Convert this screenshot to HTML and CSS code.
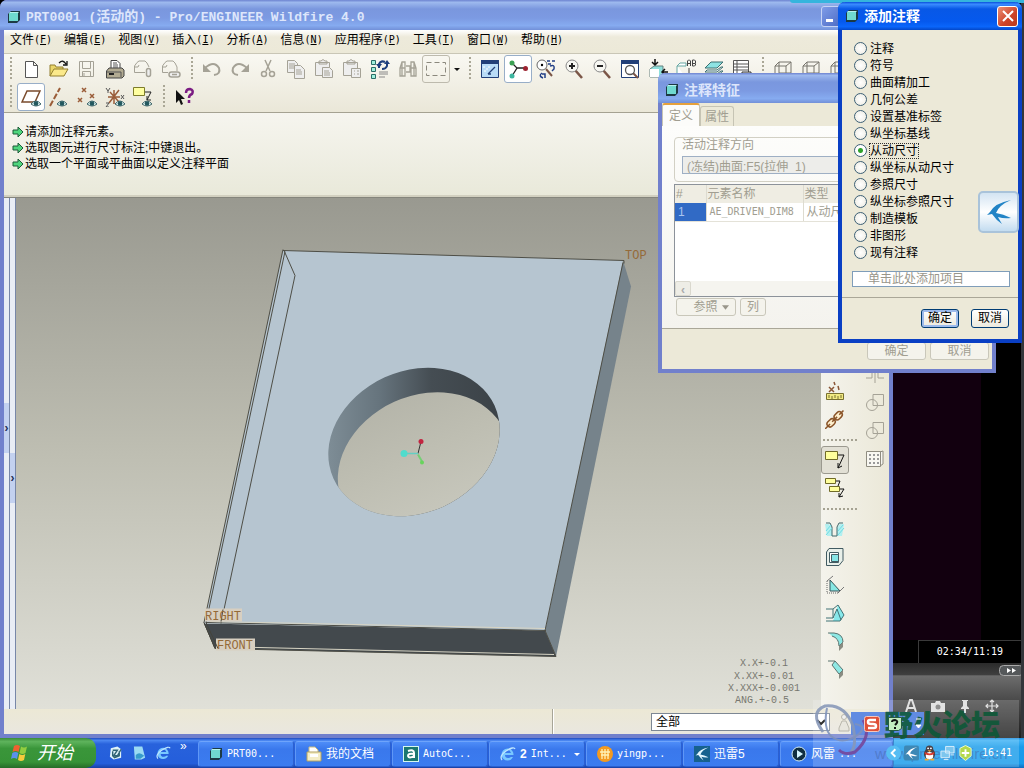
FILE: index.html
```html
<!DOCTYPE html>
<html lang="zh-CN">
<head>
<meta charset="utf-8">
<title>PRT0001 (活动的) - Pro/ENGINEER Wildfire 4.0</title>
<link rel="stylesheet" href="styles.css">
</head>
<body>
<svg class="defs" aria-hidden="true">
  <defs>
    <symbol id="cube" viewBox="0 0 14 14"><path d="M1 4 4 1h9v9l-3 3H1z" fill="#1c3a44"/><path d="M2 3h9v8H2z" fill="#6fd9d0"/><path d="M2 3l1-1h9l-1 1z" fill="#b5f2ee"/></symbol>
    <symbol id="eye" viewBox="0 0 10 7"><path d="M0 4Q5-2 10 4Q5 8 0 4z" fill="#d9eeee" stroke="#3d6468"/><circle cx="5" cy="3.500" r="2.300" fill="#23585e"/></symbol>
    <symbol id="wire" viewBox="0 0 20 20"><path d="M2 7h11v11H2zM2 7l4-4h12v11l-5 4M13 7l5-4M6 3v11h12M6 14l-4 4" fill="none" stroke="#77746c"/></symbol>
    <symbol id="bird" viewBox="0 0 30 30"><path d="M27 3Q11 6 6 15L3 18l5-1Q12 23 18 27Q15 22 14 20Q20 22 27 21Q19 17 12 16Q15 8 27 3z" fill="currentColor"/></symbol>
    <symbol id="ie" viewBox="0 0 16 16"><path d="M13 9H5Q5 12 8 12Q10 12 11 11H13Q11 14.500 8 14.500A6 6 0 1 1 13.500 9zM5 7h6Q10 4 8 4Q5.500 4 5 7z" fill="#79c8ff"/><path d="M2 14Q-1 10 6 5Q14 0 15 3" fill="none" stroke="#bfe6ff" stroke-width="1.300"/></symbol>
    <symbol id="arrow" viewBox="0 0 12 12"><path d="M1 4h5V1l5 5-5 5V8H1z" fill="#4fd67d" stroke="#1d5b38"/></symbol>
    <symbol id="shapes" viewBox="0 0 20 20"><path d="M8 1.500h10.500v11H8z" fill="none" stroke="#a5a296"/><circle cx="7" cy="12" r="5.500" fill="none" stroke="#a5a296"/></symbol>
    <linearGradient id="sky" gradientUnits="userSpaceOnUse" x1="0" y1="197" x2="0" y2="709"><stop offset="0" stop-color="#999990"/><stop offset=".5" stop-color="#bebeb2"/><stop offset="1" stop-color="#e0e0d8"/></linearGradient>
    <linearGradient id="wall" gradientUnits="userSpaceOnUse" x1="328" y1="0" x2="500" y2="0"><stop offset="0" stop-color="#7e8d96"/><stop offset=".3" stop-color="#66747d"/><stop offset=".6" stop-color="#454d53"/><stop offset="1" stop-color="#3b4247"/></linearGradient>
    <clipPath id="hole"><ellipse cx="414" cy="441.500" rx="88.400" ry="71" transform="rotate(-24.300 414 441.500)"/></clipPath>
  </defs>
</svg>

<div class="desktop">
  <section class="player">
    <div class="screen"></div>
    <div class="time">02:34/11:19</div>
    <div class="deck">
      <div class="seek"><svg viewBox="0 0 22 11"><rect x=".5" y=".5" width="24" height="10" rx="4" fill="#55585a" stroke="#aaa"/><path d="M8 3l4 2.500-4 2.500zM13 3l4 2.500-4 2.500z" fill="#fff"/></svg></div>
      <div class="deck-icons">
        <svg viewBox="0 0 14 14"><path d="M2 13 6 1h2l4 12M4 9h6" fill="none" stroke="#ddd" stroke-width="2"/></svg>
        <svg viewBox="0 0 14 14"><path d="M0 4h4l1-2h4l1 2h4v9H0z" fill="#ddd"/><circle cx="7" cy="8" r="2.500" fill="#777"/></svg>
        <svg viewBox="0 0 14 14"><path d="M4 1h6v1H9v5l2 2v1H8v4H6v-4H3V9l2-2V2H4z" fill="#ddd"/></svg>
        <svg viewBox="0 0 14 14"><path d="M7 1v12M1 7h12M5 3l2-2 2 2M5 11l2 2 2-2M3 5 1 7l2 2M11 5l2 2-2 2" fill="none" stroke="#ddd" stroke-width="1.200"/></svg>
      </div>
    </div>
  </section>

  <main class="window cad">
    <header class="titlebar">
      <svg class="i14"><use href="#cube"/></svg>
      <h1>PRT0001 (<b class="zh">活动的</b>) - Pro/ENGINEER Wildfire 4.0</h1>
      <button class="minimise" aria-label="最小化"></button>
    </header>
    <nav class="menubar">
      <button>文件<i>(<u>F</u>)</i></button><button>编辑<i>(<u>E</u>)</i></button><button>视图<i>(<u>V</u>)</i></button><button>插入<i>(<u>I</u>)</i></button><button>分析<i>(<u>A</u>)</i></button><button>信息<i>(<u>N</u>)</i></button><button>应用程序<i>(<u>P</u>)</i></button><button>工具<i>(<u>T</u>)</i></button><button>窗口<i>(<u>W</u>)</i></button><button>帮助<i>(<u>H</u>)</i></button>
    </nav>
    <div class="toolbars">
      <div class="toolrow">
        <span class="grip"></span>
        <button aria-label="新建"><svg viewBox="0 0 20 20"><path d="M4.500 2.500h8l4 4v12h-12zM12.500 2.500v4h4" fill="#fff" stroke="#555"/></svg></button>
        <button aria-label="打开"><svg viewBox="0 0 20 20"><path d="M1 17V6h5l1 2h7v3" fill="#ead66a" stroke="#927f31"/><path d="M1 17 5 10h14l-4 7z" fill="#fbe98b" stroke="#927f31"/><path d="M10 4q4-4 7 1M18 2v4h-4" fill="none" stroke="#111" stroke-width="1.300"/></svg></button>
        <button aria-label="保存"><svg viewBox="0 0 20 20"><path d="M2.500 2.500h14v15h-14zM5.500 2.500v7h8v-7M5.500 17.500v-5h8v5M7 14v3" fill="none" stroke="#a5a296"/></svg></button>
        <button aria-label="打印"><svg viewBox="0 0 20 20"><path d="M6 10V1.500h6l3 3V10" fill="#fff" stroke="#444"/><path d="M8 4h4M8 6h5M8 8h5" stroke="#555"/><path d="M1.500 12 4 9h13l2 2v6l-2 2H1.500z" fill="#b2ab92" stroke="#444"/><path d="M2 13h14v5" fill="none" stroke="#555"/><path d="M4 15h5" stroke="#222" stroke-width="2"/></svg></button>
        <button aria-label="发送邮件"><svg viewBox="0 0 20 20"><path d="M1.500 13.500V7L4 3.500 6 2h6l2 2 2 4M1.500 13.500H12M2 8h3l1-2" fill="none" stroke="#a5a296"/><rect x="13.500" y="9.500" width="4" height="8" rx="2" fill="#eee" stroke="#a5a296" stroke-width="1.500"/></svg></button>
        <button aria-label="发送链接"><svg viewBox="0 0 20 20"><path d="M1.500 13.500V7L4 3.500 6 2h6l2 2 2 4v4M1.500 13.500H7M2 8h3l1-2" fill="none" stroke="#a5a296"/><rect x="8" y="13" width="11" height="5" rx="2.500" fill="#eee" stroke="#a5a296" stroke-width="1.500"/><path d="M11 15.500h5" stroke="#a5a296" stroke-width="1.500"/></svg></button>
        <span class="grip"></span>
        <button aria-label="撤消"><svg viewBox="0 0 20 20"><path d="M3 9q9-8 14 0 2 6-5 7" fill="none" stroke="#a5a296" stroke-width="2"/><path d="M1 5v8h8z" fill="#a5a296"/></svg></button>
        <button aria-label="重做"><svg viewBox="0 0 20 20"><path d="M17 9Q8 1 3 9q-2 6 5 7" fill="none" stroke="#a5a296" stroke-width="2"/><path d="M19 5v8h-8z" fill="#a5a296"/></svg></button>
        <button aria-label="剪切"><svg viewBox="0 0 20 20"><path d="M7 1l5 11M13 1 8 12" fill="none" stroke="#a5a296" stroke-width="1.500"/><circle cx="6" cy="15" r="2.500" fill="none" stroke="#a5a296" stroke-width="1.500"/><circle cx="14" cy="15" r="2.500" fill="none" stroke="#a5a296" stroke-width="1.500"/></svg></button>
        <button aria-label="复制"><svg viewBox="0 0 20 20"><path d="M1.500 1.500h7l3 3v9h-10z" fill="#eee" stroke="#a5a296"/><path d="M3 5h6M3 7h6M3 9h6" stroke="#a5a296"/><path d="M8.500 6.500h6l4 4v9h-10zM10 11h5M10 13h6M10 15h6" fill="#eee" stroke="#a5a296"/></svg></button>
        <button aria-label="粘贴"><svg viewBox="0 0 20 20"><path d="M1.500 3.500h14v13h-14zM5 5V2h2q2-3 4 0h2v3z" fill="#eee" stroke="#a5a296"/><path d="M8.500 8.500h7l3 3v7h-10zM10 12h5M10 14h6M10 16h6" fill="#eee" stroke="#a5a296"/></svg></button>
        <button aria-label="选择性粘贴"><svg viewBox="0 0 20 20"><path d="M1.500 3.500h14v13h-14zM5 5V2h2q2-3 4 0h2v3z" fill="#eee" stroke="#a5a296"/><path d="M9.500 9.500h9v9h-9zM12 12h1M15 12h2M12 15h1M15 15h2" fill="#eee" stroke="#a5a296"/></svg></button>
        <button aria-label="再生"><svg viewBox="0 0 20 20"><path d="M1.500 1.500h4v4h-4zM1.500 8.500h4v4h-4zM1.500 15.500h4v4h-4z" fill="#9ff0dc" stroke="#2a6d66"/><path d="M9 9V5q2-4 6-2M17 3v4q-1 3-5 3" fill="none" stroke="#1e3f7d" stroke-width="2"/><path d="M6 5h6L9 9zM14 5h6l-3-4z" fill="#1e3f7d"/><path d="M9 13h9M9 15h9M9 18h6" stroke="#888"/></svg></button>
        <button aria-label="查找"><svg viewBox="0 0 20 20"><path d="M2 17V9l2-6h3v14zM13 17V3h3l2 6v8zM8 7h4v6H8M4 3v14M16 3v14M2 9h5M13 9h5" fill="none" stroke="#a5a296" stroke-width="1.300"/></svg></button>
        <button class="framed" aria-label="选择框"><svg viewBox="0 0 20 20"><path d="M.5 3.500h19v13H.5z" fill="none" stroke="#8b887d" stroke-dasharray="5 3"/></svg></button>
        <button class="narrow" aria-label="选择选项"><svg viewBox="0 0 7 7"><path d="M1 2h6L4 5z" fill="#111"/></svg></button>
        <span class="grip"></span>
        <button aria-label="重画"><svg viewBox="0 0 20 20"><path d="M1.500 1.500h17v17h-17z" fill="#b9dcf7" stroke="#213f78"/><path d="M1 1h18v4H1z" fill="#213f78"/><path d="M3 8h2M6 10h2M4 12h2M8 8h2" stroke="#fff"/><path d="M8 15 15 8M8 15h3" stroke="#213f78" stroke-width="1.300"/></svg></button>
        <button class="checked" aria-label="旋转中心"><svg viewBox="0 0 20 20"><path d="M4 4l5 5-5 8M9 9h9" fill="none" stroke="#222" stroke-width="1.300"/><circle cx="4" cy="4" r="2.500" fill="#3ba053"/><circle cx="4" cy="17" r="2.500" fill="#3cb6a0"/><circle cx="17.500" cy="9.500" r="2.500" fill="#9c2331"/></svg></button>
        <button aria-label="定向模式"><svg viewBox="0 0 20 20"><circle cx="6" cy="6" r="5" fill="#fff" stroke="#666"/><circle cx="6" cy="6" r="1.200"/><path d="M10 10l6 7" stroke="#7b5647" stroke-width="2"/><path d="M11 2h3M16 2h3M12 5h3M14 7q5-2 4 3l-2 2M6 14q-4 3 1 5M6 15l3 0v4" fill="none" stroke="#223f86" stroke-width="1.500"/></svg></button>
        <button aria-label="放大"><svg viewBox="0 0 20 20"><path d="M11 11l7 8" stroke="#7b5647" stroke-width="2.500"/><circle cx="8" cy="7" r="6" fill="#f7f7f2" stroke="#888"/><path d="M8 4v6M5 7h6" stroke="#222" stroke-width="2"/></svg></button>
        <button aria-label="缩小"><svg viewBox="0 0 20 20"><path d="M11 11l7 8" stroke="#7b5647" stroke-width="2.500"/><circle cx="8" cy="7" r="6" fill="#f7f7f2" stroke="#888"/><path d="M5 7h6" stroke="#222" stroke-width="2"/></svg></button>
        <button aria-label="重新调整"><svg viewBox="0 0 20 20"><path d="M1.500 1.500h17v17h-17z" fill="#fff" stroke="#213f78"/><path d="M1 1h18v4H1z" fill="#213f78"/><path d="M13 14l5 5" stroke="#7b5647" stroke-width="2"/><circle cx="10" cy="11" r="4.500" fill="none" stroke="#555" stroke-width="1.300"/></svg></button>
        <button aria-label="视图方向"><svg viewBox="0 0 20 20"><path d="M2 10l4-3h9v7l-3 4H2z" fill="#8fe0dc" stroke="#66817f"/><path d="M2 10h9v8H2z" fill="#fff"/><path d="M7 0v6M4 3l3 3 3-3M20 13h-6M17 10l-3 3 3 3" fill="none" stroke="#111" stroke-width="1.500"/></svg></button>
        <button aria-label="视图列表"><svg viewBox="0 0 20 20"><path d="M1 7l3-3h6v3H1v10h8" fill="#fff" stroke="#66a7a3"/><path d="M11.500 7V2l1-1h1l1 1v5M11.500 4.500h3M16.500 1v6h2l1-1V4.500h-3M16.500 1h2l1 1v2M13 9v8" fill="none" stroke="#444"/></svg></button>
        <button aria-label="层"><svg viewBox="0 0 20 20"><path d="M1 9l6-6h12l-6 6z" fill="#8de3e3" stroke="#3c6e70"/><path d="M1 13l2-2h10l4-3 2 0-6 5zM1 17l2-2h10l4-3 2 0-6 5z" fill="#fff" stroke="#3c6e70"/></svg></button>
        <button aria-label="视图管理器"><svg viewBox="0 0 20 20"><path d="M1.500 1.500h15v14h-15zM1 5h15M1 8h15M1 11h15M5 1v14" fill="#fff" stroke="#555"/><path d="M10 13h9v5h-9z" fill="#ddd" stroke="#333"/></svg></button>
        <span class="grip"></span>
        <button aria-label="线框"><svg><use href="#wire"/></svg></button>
        <button aria-label="隐藏线"><svg><use href="#wire"/></svg></button>
        <button aria-label="无隐藏线"><svg><use href="#wire"/></svg></button>
      </div>
      <div class="toolrow">
        <span class="grip"></span>
        <button class="checked" aria-label="基准平面"><svg viewBox="0 0 20 20"><path d="M1 15 6 4h13l-5 11z" fill="none" stroke="#7a4b2c" stroke-width="1.500"/><use href="#eye" x="10" y="13" width="10" height="7"/></svg></button>
        <button aria-label="基准轴"><svg viewBox="0 0 20 20"><path d="M1 19 11 1" stroke="#9a5c38" stroke-width="2" stroke-dasharray="6 2"/><use href="#eye" x="8" y="13" width="10" height="7"/></svg></button>
        <button aria-label="基准点"><svg viewBox="0 0 20 20"><path d="M5 1l4 4M9 1 5 5M1 11l4 4M5 11l-4 4M13 7l4 4M17 7l-4 4" stroke="#9a5c38" stroke-width="1.500"/><use href="#eye" x="10" y="13" width="10" height="7"/></svg></button>
        <button aria-label="坐标系"><svg viewBox="0 0 20 20"><path d="M9 3v14M3 10h12M5 5l9 10M14 3 4 16" stroke="#9a5c38" stroke-width="1.500"/><path d="M1 1l2 3 2-3M3 4v2M1 16h3l-3 4h3M16 8l3 4M19 8l-3 4" fill="none" stroke="#555"/><use href="#eye" x="10" y="13" width="10" height="7"/></svg></button>
        <button aria-label="注释显示"><svg viewBox="0 0 20 20"><path d="M.5 .500h11v8H.5z" fill="#ffffa0" stroke="#7d7c2a"/><path d="M12 5h6l-4 8M14 9v4h4" fill="none" stroke="#222"/><use href="#eye" x="9" y="13" width="10" height="7"/></svg></button>
        <span class="grip"></span>
        <button aria-label="帮助指针"><svg viewBox="0 0 20 20"><path d="M2 3v13l3-3 2 5 2-1-2-5h4z" fill="#111"/><path d="M12 6q0-4 4-4 4 1 2 5-3 1-3 4M15 13v3" fill="none" stroke="#7b1d83" stroke-width="2.500"/></svg></button>
      </div>
    </div>
    <div class="messages">
      <p><svg><use href="#arrow"/></svg>请添加注释元素。</p>
      <p><svg><use href="#arrow"/></svg>选取图元进行尺寸标注;中键退出。</p>
      <p><svg><use href="#arrow"/></svg>选取一个平面或平曲面以定义注释平面</p>
    </div>
    <div class="workspace">
      <div class="rail"><button aria-label="展开导航器">›</button></div>
      <div class="rail second"><button aria-label="展开浏览器">›</button></div>
      <svg class="model" viewBox="16 197 805 512" preserveAspectRatio="xMidYMid slice" role="img" aria-label="带孔的板">
        <rect x="0" y="190" width="900" height="530" fill="url(#sky)"/>
        <path d="M623 260l8 26-75 370-11-26z" fill="#76838b"/>
        <path d="M204 623l341 7 11 26-341-8z" fill="#43494d"/>
        <path d="M283 250l340 10-78 370-341-7z" fill="#b6c5d0"/>
        <g clip-path="url(#hole)"><rect x="320" y="360" width="190" height="165" fill="url(#wall)"/><ellipse cx="423.500" cy="466" rx="88.400" ry="71" transform="rotate(-24.300 423.500 466)" fill="url(#sky)"/></g>
        <g fill="none" stroke="#4e4e46"><path d="M283 250l341 10v3M283 249l-79 373 11 26M285 251l-79 371M284 250l11 25-74 348M206 622l340 8-1 0M545 630l78-368M545 630l11 26-341-8"/><path d="M210 621l335 7M216 646l338 8" stroke="#d8d5c4"/></g>
        <path d="M205 608h37v13h-37zM216 638h39v12h-39z" fill="#d8cfc0"/>
        <path d="M206 622l12 26M204 622l11 26M223 609l-2 12" stroke="#44443c"/>
        <g class="datum"><text x="625" y="258">TOP</text><text x="205" y="619">RIGHT</text><text x="217" y="648">FRONT</text></g>
        <path d="M418 453l3-12" stroke="#333"/><path d="M404 453h14" stroke="#63cfc3" stroke-width="1.500"/><path d="M418 454l4 7" stroke="#75cf75" stroke-width="2"/>
        <circle cx="421" cy="441" r="2.500" fill="#c22440"/><circle cx="404" cy="453" r="3.500" fill="#50dccc"/><circle cx="422" cy="462" r="2" fill="#68d45c"/>
        <g class="tolerance"><text x="764" y="665">X.X+-0.1</text><text x="764" y="678">X.XX+-0.01</text><text x="764" y="690">X.XXX+-0.001</text><text x="762" y="702">ANG.+-0.5</text></g>
      </svg>
      <aside class="sidebar">
        <div class="sidecol main-tools">
          <button aria-label="测量点"><svg viewBox="0 0 20 20"><path d="M4 6l5 5M9 6l-5 5M9 1l1 3M13 5l1 4" stroke="#8a5636" stroke-width="1.500"/><path d="M1.500 12.500h17v6h-17z" fill="#f1e982" stroke="#777031"/><path d="M4 14v3M7 15v3M10 14v3M13 15v3M16 14v3" stroke="#777031"/></svg></button>
          <button aria-label="链接"><svg viewBox="0 0 20 20"><g transform="rotate(-45 10 10)" fill="#fff0ce" stroke="#8a5429" stroke-width="1.500"><rect x="0" y="7" width="9" height="6" rx="3"/><rect x="10" y="7" width="9" height="6" rx="3"/><path d="M-4 10h7M6 10h7M16 10h6"/></g></svg></button>
          <span class="rule"></span>
          <button class="pressed" aria-label="注释"><svg viewBox="0 0 20 20"><path d="M.5 1.500h12v8H.5z" fill="#ffff9c" stroke="#706b28"/><path d="M13 5h6l-6 13M13 13v5l4-2" fill="none" stroke="#111"/></svg></button>
          <button aria-label="注释传播"><svg viewBox="0 0 20 20"><path d="M.5 .500h10v5h-10zM4.500 8.500h10v5h-10z" fill="#ffff9c" stroke="#706b28"/><path d="M11 3h4l-2 5M15 11h4l-5 8M14 15v4l4-1" fill="none" stroke="#111"/></svg></button>
          <span class="rule"></span>
          <button aria-label="孔"><svg viewBox="0 0 20 20"><path d="M0 5h4l3 4v8H2zM19 5h-4l-3 4v8h5z" fill="#b2eff0"/><path d="M1 4h4l2 4v9h5V8l2-4h4" fill="none" stroke="#41686d"/><path d="M1 12l5-6M1 16l6-7M13 12l5-6M13 16l6-7" stroke="#6fdbe2"/></svg></button>
          <button aria-label="壳"><svg viewBox="0 0 20 20"><path d="M1.500 5 4 1.500h14v12L14 18.500H1.500z" fill="#e8efe9" stroke="#425b62"/><path d="M4.500 5.500h9v10h-9z" fill="#fff" stroke="#425b62"/><path d="M6.500 7.500h7v7h-7z" fill="#86e4e5" stroke="#425b62"/></svg></button>
          <button aria-label="筋"><svg viewBox="0 0 20 20"><path d="M5 5v11h10z" fill="#87e8e4" stroke="#37555a"/><path d="M2 6l6-5M13 18l6-6" stroke="#777"/><path d="M2 6v12h12" fill="none" stroke="#666" stroke-dasharray="1 1"/></svg></button>
          <button aria-label="拔模"><svg viewBox="0 0 20 20"><path d="M1 18h7l5-16 6 10-4 6z" fill="#86e8ea"/><path d="M1 6h7v9H1M8 6l5-4 6 10-4 6H1M8 15l4-9 4 11" fill="none" stroke="#417276"/></svg></button>
          <button aria-label="倒圆角"><svg viewBox="0 0 20 20"><path d="M4 2h5q9 1 9 9l-4 4q0-8-7-10" fill="#8de8e4"/><path d="M3 2h6q9 1 9 9l-4 4q0-8-7-10" fill="none" stroke="#59726f"/><path d="M14 15l4-4v5l-4 4z" fill="#8a8c82"/></svg></button>
          <button aria-label="倒角"><svg viewBox="0 0 20 20"><path d="M7 6l3-4 8 9-4 4z" fill="#8de8e4" stroke="#59726f"/><path d="M3 2h7" stroke="#59726f"/><path d="M14 15l4-4v5l-4 4z" fill="#8a8c82"/></svg></button>
        </div>
        <div class="sidecol edit-tools">
          <button aria-label="镜像"><svg viewBox="0 0 20 20"><path d="M10 3v15M7 3v10H1M13 3v10h6" fill="none" stroke="#a5a296"/></svg></button>
          <button aria-label="合并"><svg><use href="#shapes"/></svg></button>
          <button aria-label="修剪"><svg><use href="#shapes"/></svg></button>
          <button aria-label="阵列"><svg viewBox="0 0 20 20"><path d="M1.500 2.500h14v15h-14zM15 3l3-1v13l-3 2" fill="#f8f7f1" stroke="#8f8c80"/><path d="M4 6h10M4 10h10M4 14h10" stroke="#999" stroke-width="2" stroke-dasharray="2 2"/></svg></button>
        </div>
      </aside>
    </div>
    <footer class="statusbar">
      <div class="status-text"></div>
      <div class="filter"><select aria-label="选择过滤器"><option>全部</option></select><svg viewBox="0 0 12 20"><circle cx="6" cy="4" r="2.500" fill="#eee" stroke="#aaa79a"/><path d="M4 8h4l3 7v3H1v-3z" fill="#e4e2d8" stroke="#aaa79a"/></svg></div>
    </footer>
  </main>

  <section class="window feature">
    <header class="titlebar"><svg class="i14"><use href="#cube"/></svg><h2>注释特征</h2></header>
    <div class="tabs"><button class="on">定义</button><button>属性</button></div>
    <div class="tabpanel">
      <fieldset disabled>
        <label for="dir">活动注释方向</label>
        <input id="dir" value="(冻结)曲面:F5(拉伸_1)">
      </fieldset>
      <div class="grid">
        <table>
          <thead><tr><th class="num">#</th><th class="name">元素名称</th><th>类型</th></tr></thead>
          <tbody><tr><td class="sel">1</td><td><i>AE_DRIVEN_DIM8</i></td><td>从动尺寸</td></tr></tbody>
        </table>
        <div class="scroll"><button disabled aria-label="向左滚动">‹</button></div>
      </div>
      <div class="pair"><button disabled class="refs">参照 <svg viewBox="0 0 8 5"><path d="M0 0h8L4 5z" fill="#99968a"/></svg></button><button disabled>列</button></div>
    </div>
    <div class="actions"><button disabled>确定</button><button disabled>取消</button></div>
  </section>

  <div class="player-edge"></div>

  <section class="window add">
    <header class="titlebar"><svg class="i14"><use href="#cube"/></svg><h2>添加注释</h2><button class="close" aria-label="关闭"><svg viewBox="0 0 12 12"><path d="M1 1l10 10M11 1 1 11" stroke="#fff" stroke-width="2"/></svg></button></header>
    <form class="add-body">
      <div class="choices">
        <label><input type="radio" name="k"><span>注释</span></label>
        <label><input type="radio" name="k"><span>符号</span></label>
        <label><input type="radio" name="k"><span>曲面精加工</span></label>
        <label><input type="radio" name="k"><span>几何公差</span></label>
        <label><input type="radio" name="k"><span>设置基准标签</span></label>
        <label><input type="radio" name="k"><span>纵坐标基线</span></label>
        <label><input type="radio" name="k" checked><span>从动尺寸</span></label>
        <label><input type="radio" name="k"><span>纵坐标从动尺寸</span></label>
        <label><input type="radio" name="k"><span>参照尺寸</span></label>
        <label><input type="radio" name="k"><span>纵坐标参照尺寸</span></label>
        <label><input type="radio" name="k"><span>制造模板</span></label>
        <label><input type="radio" name="k"><span>非图形</span></label>
        <label><input type="radio" name="k"><span>现有注释</span></label>
      </div>
      <input class="collector" aria-label="参照收集器" placeholder="单击此处添加项目">
      <div class="actions"><button type="button" class="default">确定</button><button type="button">取消</button></div>
    </form>
  </section>

  <button class="bird" aria-label="迅雷"><svg><use href="#bird"/></svg></button>

  <div class="langbar">
    <svg viewBox="0 0 16 16"><rect x=".5" y=".5" width="15" height="15" rx="2" fill="#df5038" stroke="#f5c6bb"/><path d="M12 4H6Q4 4 4 6t3 2h2q3 0 3 2t-2 2H4" fill="none" stroke="#fff" stroke-width="2.500"/></svg>
    <svg viewBox="0 0 16 16"><path d="M1.500 1.500h13v11l-3 2h-10z" fill="#c3ecc0" stroke="#275a43"/><path d="M5 6q0-2 3-2 4 1 1 4L8 9M8 11v2" fill="none" stroke="#111" stroke-width="2"/></svg>
    <svg viewBox="0 0 16 16"><path d="M6 3h5M6 9h5L8.500 12z" fill="#fff" stroke="#fff"/></svg>
  </div>
</div>

<footer class="taskbar">
  <button class="start"><svg viewBox="0 0 20 20"><path d="M3 3q3-2 6 0L7.500 9q-3-2-6 0z" fill="#ef6130"/><path d="M10 3.500q3 2 6 0L14.500 10q-3 2-6 0z" fill="#92cd40"/><path d="M1.300 10q3-2 6 0L6 16q-3-2-6 0z" fill="#5b91ec"/><path d="M8.300 11q3 2 6 0L13 17q-3 2-6 0z" fill="#f7cb3c"/></svg>开始</button>
  <div class="quick">
    <svg viewBox="0 0 16 16"><path d="M3 3 10 1l4 3v9l-8 2-4-3z" fill="#dff3f8"/><path d="M5 5h5l-4 6h4l4-7M12 6v5l-5 2-2-2V6" fill="none" stroke="#306474" stroke-width="1.500"/></svg>
    <svg viewBox="0 0 16 16"><path d="M2 1h9l3 12-4 2H3z" fill="#9bdaf3"/><path d="M4 10q4-4 9 1l-4 3H4z" fill="#389bcc"/></svg>
    <svg><use href="#ie"/></svg>
    <span>»</span>
  </div>
  <div class="tasks">
    <button><svg class="i14"><use href="#cube"/></svg><i>PRT00...</i></button>
    <button><svg viewBox="0 0 16 16"><path d="M3 6V1h6l3 3v3" fill="#fff" stroke="#c7bc83"/><path d="M1 6h14v9H1z" fill="#f4edc7" stroke="#b4a360"/><path d="M4 8h8v3H4z" fill="#fff"/></svg>我的文档</button>
    <button><svg viewBox="0 0 16 16"><rect x=".5" y=".5" width="15" height="15" fill="#1b7770" stroke="#d5f7ef"/><path d="M5 5q6-2 6 2v5M11 8Q5 7 5 10q1 3 6 0" fill="none" stroke="#fff" stroke-width="2"/></svg><i>AutoC...</i></button>
    <button><svg><use href="#ie"/></svg><b>2</b><i>Int...</i><svg class="caret" viewBox="0 0 7 7"><path d="M1 2h6L4 5z" fill="#fff"/></svg></button>
    <button><svg viewBox="0 0 16 16"><circle cx="8" cy="8" r="8" fill="#f39a20"/><path d="M3 6h10M5 3v10M8 3v10M11 3v10M4 9h8" stroke="#fff2b6" stroke-width="1.300"/></svg><i>yingp...</i></button>
    <button><svg viewBox="0 0 16 16"><rect width="16" height="16" fill="#16618e"/><use href="#bird" width="16" height="16" color="#e2f6ff"/></svg>迅雷5</button>
    <button><svg viewBox="0 0 16 16"><circle cx="8" cy="8" r="7" fill="#112f42" stroke="#d4edf4"/><path d="M6 4l6 4-6 4z" fill="#d4f5ff"/></svg>风雷<i>...</i></button>
  </div>
  <div class="tray">
    <button aria-label="显示隐藏的图标"><svg viewBox="0 0 16 16"><circle cx="8" cy="8" r="8" fill="#57bdf3"/><path d="M10 4 6 8l4 4" fill="none" stroke="#fff" stroke-width="2"/></svg></button>
    <svg viewBox="0 0 16 16"><rect width="16" height="16" rx="2" fill="#3d88b5"/><use href="#bird" width="16" height="16" color="#fff"/></svg>
    <svg viewBox="0 0 16 16"><ellipse cx="8" cy="9" rx="6" ry="6" fill="#4a4146"/><circle cx="8" cy="4" r="4" fill="#4a4146"/><ellipse cx="8" cy="11" rx="4" ry="4" fill="#fff"/><path d="M3 7q5 3 10 0v2q-5 3-10 0z" fill="#dd3a2d"/><path d="M6 5h4L8 7zM3 14h4v2H3zM9 14h4v2H9z" fill="#f5ab31"/><circle cx="6.500" cy="3" r="1" fill="#fff"/><circle cx="9.500" cy="3" r="1" fill="#fff"/></svg>
    <svg viewBox="0 0 16 16"><path d="M6 1h9v7H6zM1 6h9v7H1z" fill="#7dc6ee" stroke="#dceffc"/><path d="M4 15h5M11 10h4" stroke="#dceffc"/></svg>
    <svg viewBox="0 0 16 16"><path d="M8 0l6 3v8l-6 5-6-5V3z" fill="#b4d84c" stroke="#eefad0"/><path d="M8 4v8M4 8h8" stroke="#fff" stroke-width="2"/></svg>
    <time>16:41</time>
  </div>
</footer>

<div class="watermark">
  <svg viewBox="0 0 62 62"><path d="M10 32Q-4 12 12 6q20-2 28 20 4 20-2 26" fill="none" stroke="#8a9aba" stroke-width="3"/><path d="M14 8q-4 20 4 28 12 10 28-2 8-8-4-10" fill="none" stroke="#8295bd" stroke-width="2"/><path d="M50 20q10 16-8 32-10 4-16-2" fill="none" stroke="#7a4a9c" stroke-width="3"/></svg>
  <div><strong>野火论坛</strong><span>www.proewildfire.cn</span></div>
</div>
</body>
</html>
```
FILE: styles.css
```css
* { box-sizing: border-box; }
body {
  margin: 0;
  height: 100vh;
  display: flex;
  flex-direction: column;
  overflow: hidden;
  font: 12px/16px "Liberation Sans", "Noto Sans CJK SC", sans-serif;
  color: #000;
  background: #000;
}
button, input, select { font: inherit; color: inherit; margin: 0; padding: 0; border: 0; background: none; }
h1, h2, p, fieldset { margin: 0; padding: 0; border: 0; }
i { font: 10px/16px "DejaVu Sans Mono", "Liberation Mono", monospace; }
svg { display: block; flex: none; }
.defs { position: absolute; width: 0; height: 0; }
.desktop { flex: 1; position: relative; min-height: 0; overflow: hidden; }

/* windows */
.window { position: absolute; display: flex; flex-direction: column; border: 4px solid #7180cc; border-top: 0; border-radius: 7px 7px 0 0; background: #ece9d8; }
.titlebar { display: flex; align-items: center; gap: 5px; flex: none; height: 30px; margin: 0 -4px; padding: 3px 4px 0 7px; border-radius: 7px 7px 0 0; background: linear-gradient(#6d83d0, #9db9ee 8%, #7a97de 30%, #7c9ae2 60%, #86abf0 85%, #7290d8); color: #dde6fb; }
.titlebar h1 { flex: 1; font: bold 13px/20px "Liberation Mono", monospace; white-space: pre; }
.titlebar h2 { flex: 1; font-size: 14px; font-weight: bold; line-height: 20px; }
.zh { font: bold 14px/20px "Noto Sans CJK SC", sans-serif; }
.i14 { width: 14px; height: 14px; }
.cad { inset: 0 131px 0 0; }
.minimise { width: 21px; height: 21px; margin-right: 47px; border: 1px solid #c5d3f5; border-radius: 3px; background: linear-gradient(135deg, #7e9ce8, #4c6bc4); display: flex; align-items: flex-end; padding: 4px; }
.minimise::after { content: ""; width: 7px; height: 3px; background: #fff; }

.menubar { flex: none; display: flex; gap: 12px; height: 23px; padding: 2px 6px 0; background: linear-gradient(#fff, #edeadb 30%, #ece9d8); }
.menubar button { display: flex; align-items: center; height: 16px; }
.toolbars { flex: none; border-top: 1px solid #c9c6b6; border-bottom: 1px solid #a5a292; padding: 1px 0; background: linear-gradient(#f9f8f2, #eae7d8); overflow: hidden; }
.toolrow { display: flex; height: 28px; }
.toolrow button, .sidecol button { flex: none; width: 28px; height: 28px; display: grid; place-items: center; border: 1px solid transparent; border-radius: 3px; }
.toolrow button svg, .sidecol button svg { width: 20px; height: 20px; }
.toolrow .narrow { width: 13px; }
.toolrow .narrow svg { width: 7px; height: 7px; }
.grip { flex: none; width: 13px; margin: 2px 0; background: repeating-linear-gradient(#aaa796 0 2px, transparent 2px 4px) center / 2px 100% no-repeat; }
.toolrow .checked { background: #fff; border-color: #98aec8; }
.toolrow .framed { border-color: #bdbaad; }
.messages { flex: none; height: 84px; padding: 11px 8px 0; background: linear-gradient(#f6f5ef, #e9e9da); border-bottom: 2px solid #d2d0c0; }
.messages p { display: flex; align-items: center; gap: 1px; height: 16px; }
.messages svg { width: 12px; height: 12px; }

.workspace { flex: 1; min-height: 0; display: flex; border-top: 1px solid #85857c; }
.rail { flex: none; width: 6px; padding: 205px 0 0; border-right: 1px solid #7887a8; background: #e9edf5; }
.rail.second { padding-top: 255px; }
.rail button { display: grid; place-items: center; width: 5px; height: 50px; background: #c3d1f0; color: #1d2c52; font-weight: bold; line-height: 16px; }
.model { flex: 1; min-width: 0; width: 0; height: 100%; }
.datum { font: 12px "Liberation Mono", monospace; fill: #956a38; }
.tolerance { font: 10px "Liberation Mono", monospace; fill: #77776f; text-anchor: middle; }
.sidebar { flex: none; width: 68px; display: flex; background: linear-gradient(90deg, #f4f3ec, #ebe8d8); }
.sidecol { display: flex; flex-direction: column; width: 40px; }
.sidecol.edit-tools { width: 28px; padding-top: 163px; }
.main-tools { padding-top: 179px; }
.sidecol .pressed { background: #e2e0d5; border-color: #9b998f; }
.rule { flex: none; height: 13px; margin-right: 2px; margin-left: 2px; background: repeating-linear-gradient(90deg, #a5a292 0 2px, transparent 2px 4px) center / 100% 2px no-repeat; }
.statusbar { flex: none; display: flex; height: 25px; background: linear-gradient(#ece8d5, #e9e7df); }
.status-text { flex: 1; border-right: 1px solid #a7a597; }
.filter { display: flex; gap: 8px; width: 336px; padding: 4px 0 0 97px; border-left: 1px solid #fff; }
.filter select { width: 179px; height: 18px; padding-left: 0; border: 1px solid #7d8794; background: #fff; }
.filter svg { width: 12px; height: 20px; }

/* annotation feature dialog */
.feature { left: 658px; top: 73px; width: 338px; height: 300px; }
.tabs { flex: none; display: flex; align-items: flex-end; height: 23px; }
.tabs button { height: 20px; width: 34px; border: 1px solid #c6c4b4; border-bottom: 0; border-radius: 3px 3px 0 0; color: #a19e91; }
.tabs .on { height: 23px; width: 38px; border-top: 2px solid #e6a13c; background: #fcfcfa; }
.tabpanel { flex: none; padding: 11px 12px 12px; background: linear-gradient(#fdfdfb, #f4f3ee); color: #a19e91; border-bottom: 1px solid #aaa798; }
.tabpanel fieldset { height: 45px; padding: 0 7px; border: 1px solid #d2d0c4; border-radius: 4px; }
.tabpanel label { display: block; height: 18px; line-height: 14px; }
.tabpanel input { display: block; width: 100%; height: 18px; padding: 0 4px; border: 1px solid #9eafc4; background: #ededea; color: #a19e91; }
.grid { height: 113px; margin-top: 2px; border: 1px solid #8c929a; background: #fff; display: flex; flex-direction: column; }
.grid table { width: 100%; table-layout: fixed; border-collapse: collapse; }
.grid th, .grid td { height: 18px; padding: 0 3px; text-align: left; font-weight: normal; line-height: 16px; border-right: 1px solid #dddbd0; white-space: nowrap; }
.grid th { padding: 0 1px; background: #efede3; }
.grid td { border-bottom: 1px solid #e4e2d8; }
.num { width: 31px; }
.name { width: 97px; }
.grid .sel { background: #316ac5; color: #a9c4ef; }
.scroll { margin-top: auto; height: 15px; background: #f5f4ef; }
.scroll button { display: grid; place-items: center; width: 16px; height: 15px; border: 1px solid #dad8ce; border-radius: 2px; background: #eeede6; color: #aaa; font-weight: bold; }
.pair { display: flex; gap: 4px; padding: 1px 2px 0; }
.pair button, .feature .actions button { height: 18px; border: 1px solid #c9c7ba; border-radius: 3px; background: #f4f3ec; color: #a19e91; line-height: 14px; }
.pair button { width: 26px; }
.pair .refs { width: 60px; display: flex; align-items: center; justify-content: center; gap: 4px; padding-left: 10px; }
.pair svg { width: 7px; height: 5px; }
.feature .actions { display: flex; justify-content: flex-end; gap: 4px; padding: 13px 3px 0; }
.feature .actions button { width: 59px; }

/* add annotation dialog */
.add { left: 838px; top: 2px; width: 184px; height: 341px; border-color: #0a3fc4; }
.add .titlebar { height: 28px; padding-top: 0; background: linear-gradient(#0a4fdc, #3a8cff 8%, #0858e6 25%, #0559ee 70%, #0a66fb 88%, #0347c8); color: #fff; }
.close { width: 21px; height: 21px; display: grid; place-items: center; border: 1px solid #fff; border-radius: 3px; background: linear-gradient(135deg, #ec9076, #cd4328 60%, #b93a1d); }
.close svg { width: 12px; height: 12px; }
.add-body { flex: 1; display: flex; flex-direction: column; padding-top: 10px; }
.choices { padding-left: 12px; }
.choices label { display: flex; align-items: center; gap: 2px; height: 17px; }
.choices input { appearance: none; width: 13px; height: 13px; border: 1px solid #3d6076; border-radius: 50%; background: radial-gradient(#fff, #eceae0); }
.choices input:checked { background: radial-gradient(circle, #2fa12c 0 2px, #fff 3px); }
.choices span { height: 16px; line-height: 14px; border: 1px solid transparent; }
.choices input:checked + span { border: 1px dotted #333; }
.collector { height: 16px; margin: 10px 8px 10px 10px; padding: 0 15px; border: 1px solid #7f9db9; background: #fff; }
.collector::placeholder { color: #99968a; opacity: 1; }
.add .actions { flex: 1; display: flex; justify-content: flex-end; gap: 12px; padding: 11px 9px 0; border-top: 1px solid #aaa798; }
.add .actions button { width: 38px; height: 19px; line-height: 15px; border: 1px solid #003c74; border-radius: 3px; background: linear-gradient(#fff, #eceade); }
.add .actions .default { box-shadow: inset 0 0 0 2px #9dbbec; }

.bird { position: absolute; right: 5px; top: 191px; width: 41px; height: 42px; display: grid; place-items: center; border: 2px solid #a9c3da; border-radius: 5px; background: linear-gradient(#d3e4f2, #fff 50%, #c3dcf0); color: #2384c6; }
.bird svg { width: 30px; height: 30px; }

/* media player */
.player { position: absolute; inset: 0 0 0 auto; width: 132px; display: flex; flex-direction: column; border-right: 3px solid #33363a; background: #000; color: #fff; }
.player-edge { position: absolute; right: 0; top: 0; width: 234px; height: 3px; border-radius: 0 0 0 4px; background: #35b5dd; }
.screen { flex: 1; margin-right: 40px; background: #12000f; }
.time { height: 23px; margin-left: 26px; padding-right: 18px; border-top: 1px solid #3a3a3a; border-left: 1px solid #3a3a3a; text-align: right; font: 10px/22px "DejaVu Sans Mono", monospace; }
.deck { height: 75px; background: linear-gradient(#2b2b2b, #3f3f3f 16%, #6d6d6d 17%, #444 55%, #1e1e1e); }
.seek { display: flex; justify-content: flex-end; height: 36px; }
.seek svg { width: 22px; height: 11px; margin-top: 2px; }
.deck-icons { display: flex; justify-content: flex-end; gap: 13px; padding-right: 22px; }
.deck-icons svg { width: 14px; height: 14px; }
.langbar { position: absolute; right: 100px; bottom: 3px; display: flex; align-items: center; gap: 7px; height: 23px; width: 73px; padding-left: 13px; background: #3f72dc; }
.langbar svg { position: relative; z-index: 2; width: 16px; height: 16px; }

/* taskbar */
.taskbar { flex: none; display: flex; height: 30px; background: linear-gradient(#1f4cc0, #4a86f0 8%, #2862dc 20%, #245edb 85%, #1941a5); color: #fff; }
.start { flex: none; width: 96px; display: flex; align-items: center; gap: 6px; padding-left: 11px; border-radius: 0 10px 10px 0; background: linear-gradient(#3b8c3b, #5eb35c 12%, #3a963a 35%, #379337 80%, #256c28); font-size: 18px; font-style: italic; line-height: 24px; }
.start svg { width: 20px; height: 20px; }
.quick { flex: none; width: 102px; display: flex; align-items: center; gap: 9px; padding-left: 12px; }
.quick svg { width: 15px; height: 16px; }
.quick span { align-self: flex-start; }
.tasks { flex: 1; min-width: 0; display: flex; gap: 1px; padding: 3px 0 1px; }
.tasks button { flex: 0 1 96px; min-width: 0; display: flex; align-items: center; gap: 4px; padding-left: 10px; border: 1px solid #2c60cf; border-top-color: #6ea4fb; border-left-color: #5f97f6; border-radius: 3px; background: linear-gradient(#4e8df8, #3a78ec 30%, #3b7cf0); white-space: nowrap; }
.tasks button:last-child { flex: 1; }
.tasks svg { width: 16px; height: 16px; }
.tasks .i14 { width: 14px; height: 14px; }
.tasks .caret { width: 7px; height: 7px; margin-left: auto; margin-right: 4px; }
.tray { flex: none; width: 131px; display: flex; align-items: center; gap: 3px; padding-right: 12px; border-left: 1px solid #0f6bc4; background: linear-gradient(#1a8ce0, #3cb2f6 8%, #199ceb 30%, #169aeb 85%, #0f6cbd); }
.tray button { margin-left: -8px; }
.tray svg { position: relative; z-index: 2; width: 15px; height: 16px; }
.tray time { position: relative; z-index: 2; margin-left: auto; font: 10px/16px "DejaVu Sans Mono", monospace; }

.watermark { position: absolute; z-index: 1; right: 5px; bottom: 1px; width: 206px; height: 67px; display: flex; background: rgba(255, 255, 255, .2); pointer-events: none; opacity: .9; }
.watermark svg { width: 62px; height: 62px; }
.watermark strong { display: block; margin-left: 9px; font: 900 29px/46px "Noto Sans CJK SC", sans-serif; color: #125c3c; }
.watermark div { flex: 1; min-width: 0; }
.watermark span { display: block; font-size: 15px; line-height: 16px; color: rgba(70, 100, 160, .5); }
```
